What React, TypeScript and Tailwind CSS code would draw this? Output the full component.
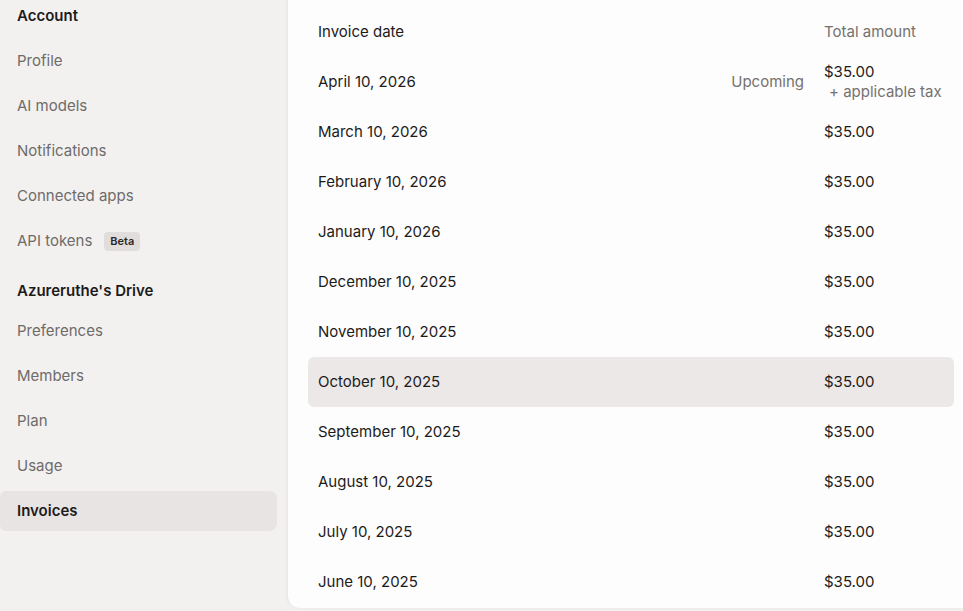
import type { ReactNode } from 'react'

type NavItem = { label: string; active?: boolean; badge?: string; first?: boolean }

const accountLinks: NavItem[] = [
  { label: 'Profile', first: true },
  { label: 'AI models' },
  { label: 'Notifications' },
  { label: 'Connected apps' },
  { label: 'API tokens', badge: 'Beta' },
]

const driveLinks: NavItem[] = [
  { label: 'Preferences', first: true },
  { label: 'Members' },
  { label: 'Plan' },
  { label: 'Usage' },
  { label: 'Invoices', active: true },
]

const invoices = [
  { date: 'April 10, 2026', amount: '$35.00', upcoming: true },
  { date: 'March 10, 2026', amount: '$35.00' },
  { date: 'February 10, 2026', amount: '$35.00' },
  { date: 'January 10, 2026', amount: '$35.00' },
  { date: 'December 10, 2025', amount: '$35.00' },
  { date: 'November 10, 2025', amount: '$35.00' },
  { date: 'October 10, 2025', amount: '$35.00', hover: true },
  { date: 'September 10, 2025', amount: '$35.00' },
  { date: 'August 10, 2025', amount: '$35.00' },
  { date: 'July 10, 2025', amount: '$35.00' },
  { date: 'June 10, 2025', amount: '$35.00' },
]

function SectionTitle({ children }: { children: ReactNode }) {
  return (
    <div className="h-[40px] flex items-center px-[17px] text-[15px] font-semibold text-[#1d1b1a]">
      {children}
    </div>
  )
}

function NavLink({ label, active, badge, first }: NavItem) {
  return (
    <div
      className={`h-[40px] flex items-center gap-[12px] px-[17px] rounded-r-lg rounded-l-md text-[15px] ${
        first ? '' : 'mt-[5px]'
      } ${active ? 'bg-[#e8e4e4] font-semibold text-[#1d1b1a]' : 'text-[#6e6b69]'}`}
    >
      <span>{label}</span>
      {badge && (
        <span className="px-[6px] h-[19px] flex items-center rounded-[4px] bg-[#e2dddd] text-[11px] font-semibold text-[#2a2726]">
          {badge}
        </span>
      )}
    </div>
  )
}

export default function App() {
  return (
    <div
      className="w-[963px] h-[611px] flex bg-[#f3f1f0] overflow-hidden"
      style={{ fontFamily: 'Inter, "Noto Sans", sans-serif' }}
    >
      {/* Settings sidebar */}
      <aside className="w-[288px] shrink-0 pr-[11px] flex flex-col -mt-[4px]">
        <SectionTitle>Account</SectionTitle>
        <div className="mt-[5px] flex flex-col">
          {accountLinks.map((l) => (
            <NavLink key={l.label} {...l} />
          ))}
        </div>
        <div className="mt-[10px]">
          <SectionTitle>Azureruthe&apos;s Drive</SectionTitle>
        </div>
        {driveLinks.map((l) => (
          <NavLink key={l.label} {...l} />
        ))}
      </aside>

      {/* Invoice list */}
      <main className="flex-1 h-[608px] bg-[#fdfdfd] rounded-bl-xl shadow-[-1px_0_3px_rgba(0,0,0,0.06)] pt-[7px] pl-[20px] pr-[9px]">
        <div className="h-[50px] grid grid-cols-[1fr_auto_120px] gap-x-[20px] items-center px-[10px] text-[15px]">
          <span className="text-[#1d1b1a]">Invoice date</span>
          <span />
          <span className="text-[#75716e]">Total amount</span>
        </div>
        {invoices.map((inv) => (
          <div
            key={inv.date}
            className={`h-[50px] grid grid-cols-[1fr_auto_120px] gap-x-[20px] items-center px-[10px] rounded-md text-[15px] text-[#1d1b1a] ${
              inv.hover ? 'bg-[#ece8e8]' : ''
            }`}
          >
            <span>{inv.date}</span>
            <span className="text-[#75716e]">{inv.upcoming ? 'Upcoming' : ''}</span>
            {inv.upcoming ? (
              <div className="flex flex-col leading-[20px]">
                <span>{inv.amount}</span>
                <span className="pl-[5px] text-[#75716e] whitespace-nowrap">+ applicable tax</span>
              </div>
            ) : (
              <span>{inv.amount}</span>
            )}
          </div>
        ))}
      </main>
    </div>
  )
}
